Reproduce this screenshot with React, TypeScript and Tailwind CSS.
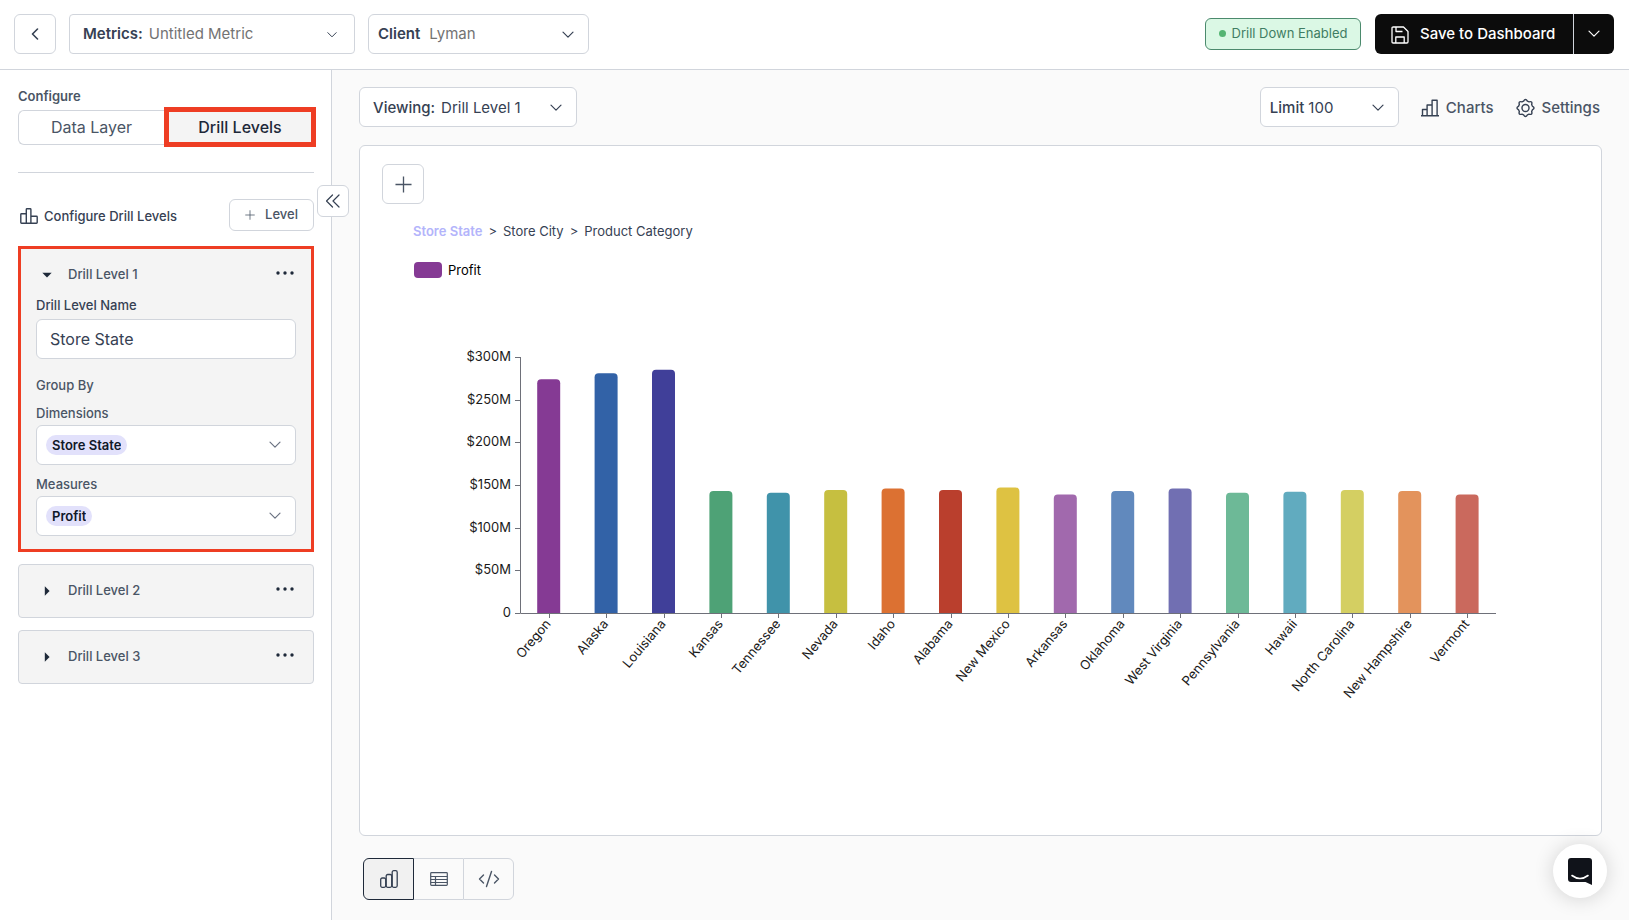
import { useState } from "react";
import type { ReactNode } from "react";

type Bar = { state: string; profit: number; color: string };

const bars: Bar[] = [
  { state: "Oregon", profit: 274, color: "#853a94" },
  { state: "Alaska", profit: 281, color: "#3262a7" },
  { state: "Louisiana", profit: 285, color: "#403f99" },
  { state: "Kansas", profit: 143, color: "#4ea276" },
  { state: "Tennessee", profit: 141, color: "#4093aa" },
  { state: "Nevada", profit: 144, color: "#c6bf40" },
  { state: "Idaho", profit: 146, color: "#dc7132" },
  { state: "Alabama", profit: 144, color: "#ba3f2d" },
  { state: "New Mexico", profit: 147, color: "#dec242" },
  { state: "Arkansas", profit: 139, color: "#a169ad" },
  { state: "Oklahoma", profit: 143, color: "#6189bd" },
  { state: "West Virginia", profit: 146, color: "#716fb2" },
  { state: "Pennsylvania", profit: 141, color: "#6db997" },
  { state: "Hawaii", profit: 142, color: "#61abbf" },
  { state: "North Carolina", profit: 144, color: "#d4cf62" },
  { state: "New Hampshire", profit: 143, color: "#e3935c" },
  { state: "Vermont", profit: 139, color: "#ca695d" },
];

const ticks = [0, 50, 100, 150, 200, 250, 300];

const Chevron = ({ className = "w-3" }: { className?: string }) => (
  <svg viewBox="0 0 12 8" className={`pointer-events-none h-2 shrink-0 ${className}`} fill="none" stroke="currentColor" strokeWidth="1.2" strokeLinecap="round" strokeLinejoin="round">
    <path d="M1 1.2l5 5 5-5" />
  </svg>
);

const Plus = ({ className = "" }: { className?: string }) => (
  <svg viewBox="0 0 18 18" className={className} fill="none" stroke="currentColor" strokeWidth="1.4">
    <path d="M9 .5v17M.5 9h17" />
  </svg>
);

const Dots = () => (
  <svg viewBox="0 0 18 4" className="h-1 w-[18px]" fill="currentColor">
    <circle cx="2" cy="2" r="1.7" />
    <circle cx="9" cy="2" r="1.7" />
    <circle cx="16" cy="2" r="1.7" />
  </svg>
);

function ProfitChart() {
  const left = 160;
  const step = 57.4;
  const bottom = 313;
  const y = (v: number) => bottom - (v * 256) / 300;
  return (
    <svg viewBox="0 0 1241 440" className="block w-full text-[13px]" role="img" aria-label="Profit by store state">
      {bars.map((b, i) => {
        const x = left + step * (i + 0.5);
        const top = y(b.profit);
        return (
          <g key={b.state}>
            <path
              d={`M${x - 11.5} ${bottom}V${top + 4}q0-4 4-4h15q4 0 4 4V${bottom}z`}
              fill={b.color}
            />
            <path d={`M${Math.round(x) + 0.5} ${bottom}v5`} stroke="#6e7079" />
            <text
              transform={`translate(${x - 1} ${bottom + 8}) rotate(-50)`}
              textAnchor="end"
              dominantBaseline="central"
              fill="#1a1a1a"
            >
              {b.state}
            </text>
          </g>
        );
      })}
      <path d={`M${left + 0.5} 57V${bottom + 0.5}H1136`} fill="none" stroke="#6e7079" />
      {ticks.map((t) => (
        <g key={t}>
          <path d={`M${left - 5} ${Math.round(y(t)) + 0.5}h5`} stroke="#6e7079" />
          <text x={left - 9} y={y(t) - 1} textAnchor="end" dominantBaseline="central" fill="#1a1a1a">
            {t === 0 ? "0" : `$${t}M`}
          </text>
        </g>
      ))}
    </svg>
  );
}

function ChipSelect({ id, label, value }: { id: string; label: string; value: string }) {
  return (
    <div>
      <label htmlFor={id} className="block text-[13px] leading-5 font-medium text-gray-600">
        {label}
      </label>
      <div className="mt-0.5 flex h-10 items-center justify-between rounded-md border border-gray-300 bg-white pr-[14px] pl-[9px] text-gray-500">
        <select
          id={id}
          className="field-sizing-content h-5 appearance-none rounded-full bg-[#e2e1fb] px-1.5 text-[13px] leading-5 font-semibold text-gray-900"
        >
          <option>{value}</option>
        </select>
        <Chevron />
      </div>
    </div>
  );
}

function DrillLevel({ name, open = false, children }: { name: string; open?: boolean; children?: ReactNode }) {
  return (
    <section
      className={
        open
          ? "border-[3px] border-[#ee3d23] bg-[#f4f4f4] px-[15px] pt-3 pb-[13px]"
          : "rounded border border-gray-300 bg-[#f4f4f4] px-[17px] py-3"
      }
    >
      <div className="flex h-7 items-center pr-0.5 pl-1.5">
        <button type="button" aria-expanded={open} className="flex flex-1 items-center text-[13px] font-medium text-gray-600">
          <svg viewBox="0 0 10 10" className="mr-4 h-2.5 w-2.5 text-gray-800" fill="currentColor">
            {open ? <path d="M.3 2.8h9.4L5 7.6z" /> : <path d="M2.8.3v9.4L7.6 5z" />}
          </svg>
          {name}
        </button>
        <button type="button" aria-label={`${name} options`} className="pb-1 text-gray-800">
          <Dots />
        </button>
      </div>
      {children}
    </section>
  );
}

export default function App() {
  const [levelName, setLevelName] = useState("Store State");

  return (
    <div className="flex min-h-screen flex-col bg-white font-['Inter',sans-serif] text-gray-700">
      <header className="flex h-[70px] items-center border-b border-gray-300 pr-[15px] pb-0.5 pl-[14px]">
        <button type="button" aria-label="Back" className="flex h-10 w-[42px] items-center justify-center rounded-md border border-gray-300">
          <svg viewBox="0 0 8 12" className="h-3 w-2" fill="none" stroke="currentColor" strokeWidth="1.6" strokeLinecap="round" strokeLinejoin="round">
            <path d="M6.5 1l-5 5 5 5" />
          </svg>
        </button>
        <div className="ml-[13px] flex h-10 w-[286px] items-center rounded border border-gray-300 pt-0.5 pr-[17px] pl-[13px] text-[15px]">
          <label htmlFor="metric" className="font-semibold">Metrics:</label>
          <select id="metric" className="ml-1.5 flex-1 appearance-none text-neutral-500">
            <option>Untitled Metric</option>
          </select>
          <Chevron className="w-[10px]" />
        </div>
        <div className="ml-[13px] flex h-10 w-[221px] items-center rounded-md border border-gray-300 pt-0.5 pr-[14px] pl-[9px] text-[15px]">
          <label htmlFor="client" className="font-semibold">Client</label>
          <select id="client" className="ml-[9px] flex-1 appearance-none text-neutral-500">
            <option>Lyman</option>
          </select>
          <Chevron />
        </div>
        <div className="ml-auto flex h-8 w-[156px] items-center justify-center gap-1.5 rounded-md border border-[#4b8a6d] bg-[#dbf8e5] text-[13px] text-[#3f7d63]">
          <span className="h-[7px] w-[7px] rounded-full bg-[#55b573]" />
          Drill Down Enabled
        </div>
        <div className="ml-[14px] flex h-10 rounded-md bg-[#0c0c0c] text-white">
          <button type="button" className="flex w-[198px] items-center gap-[11px] pt-0.5 pl-4 text-[15px] font-medium whitespace-nowrap">
            <svg viewBox="0 0 18 18" className="h-[18px] w-[18px] shrink-0" fill="none" stroke="currentColor" strokeWidth="1.3" strokeLinejoin="round">
              <path d="M1 2.2Q1 1 2.200 1H12.500L17 5.500V15.800Q17 17 15.800 17H2.200Q1 17 1 15.800z" />
              <path d="M4.800 17v-6h8.400v6M5 1v4.500h6.500" />
            </svg>
            Save to Dashboard
          </button>
          <button type="button" aria-label="More save options" className="flex w-[41px] items-center justify-center border-l border-gray-300">
            <Chevron />
          </button>
        </div>
      </header>

      <div className="flex flex-1">
        <aside className="relative w-[332px] shrink-0 border-r border-gray-300 pr-[17px] pl-[18px]">
          <h2 className="mt-4 text-[13px] leading-5 font-semibold text-gray-600">Configure</h2>
          <div className="mt-px -mr-0.5 flex h-10 items-center text-base">
            <button type="button" className="h-[35px] flex-1 rounded-l-md border border-r-0 border-gray-300 text-gray-600">
              Data Layer
            </button>
            <button type="button" className="h-10 w-[152px] border-[5px] border-[#ee3d23] bg-[#f4f4f4] font-medium text-gray-800">
              Drill Levels
            </button>
          </div>
          <hr className="mt-[25px] border-gray-300" />
          <div className="mt-[26px] flex h-8 items-center">
            <svg viewBox="0 0 18 16" className="mt-0.5 ml-0.5 h-4 w-[18px]" fill="none" stroke="currentColor" strokeWidth="1.4" strokeLinejoin="round">
              <path d="M6.300 15.200V1.500q0-.7.7-.7h3.200q.7 0 .7.700v13.700M6.300 5.800H1.500q-.7 0-.7.700v8q0 .7.700.7h15q.7 0 .7-.7V9q0-.7-.7-.7h-5.600" />
            </svg>
            <h3 className="mt-1 ml-1.5 text-[13px] font-medium">Configure Drill Levels</h3>
            <button type="button" className="ml-auto flex h-8 w-[85px] items-center justify-center gap-2.5 rounded-md border border-gray-300 text-[13px] font-medium text-gray-600">
              <Plus className="h-2.5 w-2.5" />
              Level
            </button>
          </div>

          <div className="mt-[15px] flex flex-col gap-3">
            <DrillLevel name="Drill Level 1" open>
              <label htmlFor="level-name" className="mt-1.5 block text-[13px] leading-5 font-medium text-gray-700">
                Drill Level Name
              </label>
              <input
                id="level-name"
                value={levelName}
                onChange={(e) => setLevelName(e.target.value)}
                className="mt-1 h-10 w-full rounded-md border border-gray-300 bg-white px-[13px] text-base text-gray-700"
              />
              <h4 className="mt-4 mb-2 text-[13px] leading-5 font-medium text-gray-600">Group By</h4>
              <ChipSelect id="dimensions" label="Dimensions" value="Store State" />
              <div className="h-[9px]" />
              <ChipSelect id="measures" label="Measures" value="Profit" />
            </DrillLevel>
            <DrillLevel name="Drill Level 2" />
            <DrillLevel name="Drill Level 3" />
          </div>

          <button
            type="button"
            aria-label="Collapse sidebar"
            className="absolute top-[115px] -right-[18px] flex h-8 w-8 items-center justify-center rounded-md border border-gray-300 bg-white"
          >
            <svg viewBox="0 0 14 14" className="h-[14px] w-[14px]" fill="none" stroke="currentColor" strokeWidth="1.2" strokeLinecap="round" strokeLinejoin="round">
              <path d="M6.500 1l-6 6 6 6M13 1L7 7l6 6" />
            </svg>
          </button>
        </aside>

        <main className="flex flex-1 flex-col bg-[#fafafa] px-[27px] pt-[17px] pb-5">
          <div className="flex h-10 items-center text-[15px]">
            <div className="flex h-10 w-[218px] items-center rounded-md border border-gray-300 bg-white pt-0.5 pr-[14px] pl-[13px]">
              <label htmlFor="viewing" className="font-medium">Viewing:</label>
              <select id="viewing" className="ml-1.5 flex-1 appearance-none">
                <option>Drill Level 1</option>
              </select>
              <Chevron />
            </div>
            <div className="ml-auto flex h-10 w-[139px] items-center rounded-md border border-gray-300 bg-white pt-0.5 pr-[14px] pl-[9px]">
              <label htmlFor="limit" className="font-medium">Limit</label>
              <select id="limit" className="ml-1 flex-1 appearance-none">
                <option>100</option>
              </select>
              <Chevron />
            </div>
            <button type="button" className="ml-[22px] flex items-center gap-[7px] pt-0.5 font-medium text-gray-600">
              <svg viewBox="0 0 18 18" className="h-[18px] w-[18px] text-gray-700" fill="none" stroke="currentColor" strokeWidth="1.4" strokeLinejoin="round">
                <path d="M0 16.800h18M1.500 16.800V10.500h4.600M6.100 16.800V6h5M11.100 16.800V1.200h5v15.600" />
              </svg>
              Charts
            </button>
            <button type="button" className="mr-0.5 ml-[22px] flex items-center gap-[7px] pt-0.5 font-medium text-gray-600">
              <svg viewBox="0 0 20 20" className="h-5 w-[19px] text-gray-700" fill="none" stroke="currentColor" strokeWidth="1.500" strokeLinejoin="round">
                <circle cx="10" cy="10" r="3.700" />
                <path d="M8 2.800q2-3.600 4 0l1.700.7q3.900-1.100 2.800 2.800l.7 1.700q3.600 2 0 4l-.7 1.700q1.100 3.900-2.800 2.800l-1.700.7q-2 3.600-4 0l-1.700-.7q-3.900 1.100-2.800-2.800L2.800 12q-3.600-2 0-4l.7-1.700Q2.400 2.400 6.300 3.500z" />
              </svg>
              Settings
            </button>
          </div>

          <section className="mt-[18px] flex-1 rounded-md border border-gray-300 bg-white">
            <button type="button" aria-label="Add" className="mt-[18px] ml-[22px] flex h-10 w-[42px] items-center justify-center rounded-md border border-gray-300 text-gray-600">
              <Plus className="h-[17px] w-[17px]" />
            </button>
            <nav aria-label="Drill path" className="mt-[17px] ml-[53px] flex gap-[6px] text-[13px] leading-5">
              <a href="#state" className="font-semibold text-[#b3b4fb]">Store State</a>
              <span>&gt;</span>
              <a href="#city">Store City</a>
              <span>&gt;</span>
              <a href="#category">Product Category</a>
            </nav>
            <div className="mt-[19px] ml-[54px] flex items-center gap-1.5 text-[13px] leading-5 text-black">
              <span className="h-4 w-7 rounded bg-[#853a94]" />
              Profit
            </div>
            <div className="mt-5">
              <ProfitChart />
            </div>
          </section>

          <div className="mt-[22px] ml-1 flex h-[42px] w-[151px] text-gray-600">
            <button type="button" aria-label="Chart view" className="flex flex-1 items-center justify-center rounded-l-md border border-gray-800 bg-[#f1f1f1] text-gray-700">
              <svg viewBox="0 0 18 18" className="h-[18px] w-[18px]" fill="none" stroke="currentColor" strokeWidth="1.300">
                <rect x=".7" y="8" width="5" height="9.300" rx="1.500" />
                <rect x="6.200" y="4.500" width="5.500" height="12.800" rx="1.500" />
                <rect x="12.200" y=".7" width="5" height="16.600" rx="1.500" />
              </svg>
            </button>
            <button type="button" aria-label="Table view" className="flex flex-1 items-center justify-center border-y border-gray-300">
              <svg viewBox="0 0 18 14" className="h-[14px] w-[18px]" fill="none" stroke="currentColor" strokeWidth="1.200">
                <rect x=".7" y=".7" width="16.600" height="12.600" rx=".8" />
                <path d="M.7 4.500h16.600M.7 7.500h16.600M.7 10.500h16.600M5.500 4.500v8.800" />
              </svg>
            </button>
            <button type="button" aria-label="Code view" className="flex flex-1 items-center justify-center rounded-r-md border border-gray-300">
              <svg viewBox="0 0 22 18" className="h-[18px] w-[22px]" fill="none" stroke="currentColor" strokeWidth="1.400" strokeLinecap="round" strokeLinejoin="round">
                <path d="M5.500 5L1.500 9l4 4M16.500 5l4 4-4 4M13.500 1.500l-5 15" />
              </svg>
            </button>
          </div>
        </main>
      </div>

      <button
        type="button"
        aria-label="Open chat"
        className="fixed right-[22px] bottom-[22px] flex h-[54px] w-[54px] items-center justify-center rounded-full bg-white shadow-[0_1px_20px_rgba(0,0,0,0.16)]"
      >
        <svg viewBox="0 0 24 27" className="h-[27px] w-6">
          <path d="M3 0h18q3 0 3 3v24l-6.500-3H3q-3 0-3-3V3q0-3 3-3z" fill="#10131a" />
          <path d="M4 17.500q8 6 16 0" fill="none" stroke="#fff" strokeWidth="1.600" strokeLinecap="round" />
        </svg>
      </button>
    </div>
  );
}
